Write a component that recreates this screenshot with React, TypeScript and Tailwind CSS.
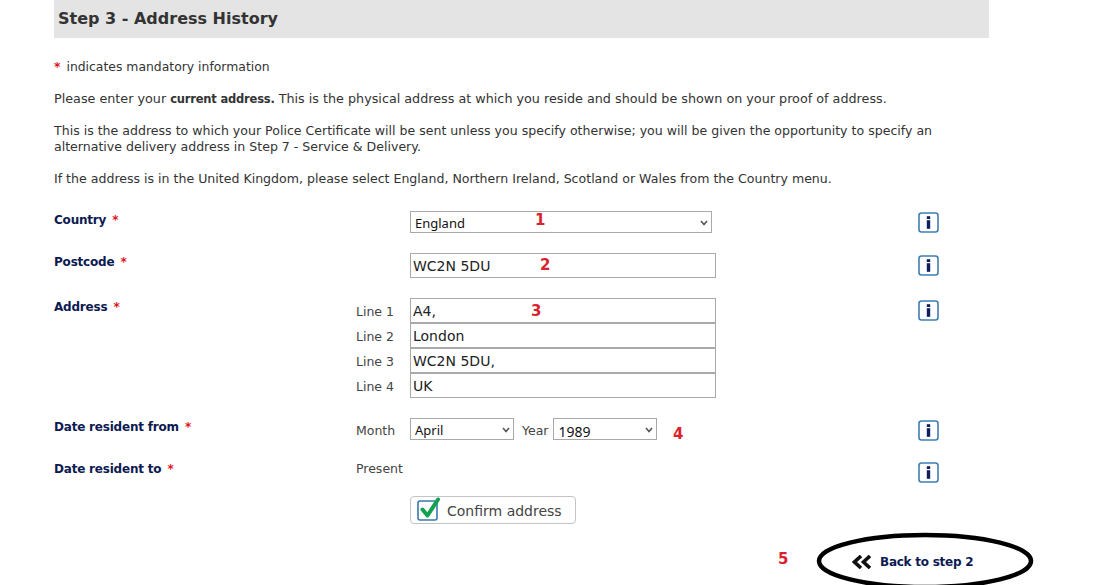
import React from "react";

const verdana = "font-['DejaVu_Sans',sans-serif]";

function Info() {
  return (
    <svg width="21" height="21" viewBox="0 0 21 21" className="block">
      <rect x="1" y="1" width="19" height="19" rx="2.5" fill="#fff" stroke="#3f7fb0" strokeWidth="1.6" />
      <rect x="8.8" y="4.2" width="3.4" height="2.8" fill="#0f1f5c" />
      <rect x="8.8" y="8.2" width="3.4" height="8.6" fill="#0f1f5c" />
    </svg>
  );
}

function Label({ children }: { children: React.ReactNode }) {
  return (
    <span className="block text-[12px] leading-[16px] font-bold tracking-[-0.2px] text-[#0c1a52]">
      {children} <span className="ml-[2px] text-[#e0141c]">*</span>
    </span>
  );
}

function Num({ children, className }: { children: React.ReactNode; className: string }) {
  return (
    <span className={`absolute font-['DejaVu_Sans',sans-serif] font-bold text-[15px] leading-[18px] text-[#d9232e] ${className}`}>
      {children}
    </span>
  );
}

const inputCls =
  "block w-[306px] h-[25px] border border-[#a9a9a9] bg-white pl-[2px] text-[14px] text-[#222] outline-none";

function Select({ value, width, textSize }: { value: string; width: string; textSize: string }) {
  return (
    <div className={`relative ${width}`}>
      <select
        defaultValue={value}
        className={`block h-[22px] w-full appearance-none border border-[#a9a9a9] bg-white pl-[4px] pt-[2px] font-['Noto_Sans',sans-serif] ${textSize} text-[#111] outline-none`}
      >
        <option>{value}</option>
      </select>
      <svg width="8" height="6" viewBox="0 0 8 6" className="pointer-events-none absolute right-[4px] top-[9px]">
        <path d="M1 1 L4 4.5 L7 1" fill="none" stroke="#555" strokeWidth="1.6" />
      </svg>
    </div>
  );
}

function Line({ n, value }: { n: number; value: string }) {
  return (
    <div className="flex items-center h-[25px]">
      <span className="w-[54px] pt-[4px] text-[12.5px] text-[#444]">Line {n}</span>
      <input className={inputCls} readOnly value={value} />
    </div>
  );
}

export default function App() {
  return (
    <div className={`relative h-[585px] w-[1112px] overflow-hidden bg-white pl-[54px] text-[12.57px] text-[#333] ${verdana}`}>
      <h1 className="flex h-[38px] w-[935px] items-center bg-[#e4e4e4] pl-[4px] text-[16px] font-bold text-[#333]">
        Step 3 - Address History
      </h1>

      <div className="w-[900px] pt-[21px] leading-[16px]">
        <p className="text-[12.4px]"><span className="font-bold text-[#e0141c]">*</span> <span className="ml-[2px]">indicates mandatory information</span></p>
        <p className="mt-[16px] text-[12.75px]">
          Please enter your <b className="text-[11.5px] tracking-[-0.2px]">current address.</b> This is the physical address at which you reside and should be shown on your proof of address.
        </p>
        <p className="mt-[16px]">
          This is the address to which your Police Certificate will be sent unless you specify otherwise; you will be given the opportunity to specify an alternative delivery address in Step 7 - Service &amp; Delivery.
        </p>
        <p className="mt-[16px]">
          If the address is in the United Kingdom, please select England, Northern Ireland, Scotland or Wales from the Country menu.
        </p>
      </div>

      <div className="mt-[24px] grid grid-cols-[356px_508px_21px] items-start">
        <div className="pt-[1px]"><Label>Country</Label></div>
        <div>
          <Select value="England" width="w-[302px]" textSize="text-[13px]" />
        </div>
        <div className="pt-[1px]"><Info /></div>

        <div className="mt-[21px]"><Label>Postcode</Label></div>
        <div className="mt-[20px]">
          <input className={inputCls} readOnly value="WC2N 5DU" />
        </div>
        <div className="mt-[22px]"><Info /></div>

        <div className="mt-[21px]"><Label>Address</Label></div>
        <div className="mt-[20px] -ml-[54px]">
          <Line n={1} value="A4," />
          <Line n={2} value="London" />
          <Line n={3} value="WC2N 5DU," />
          <Line n={4} value="UK" />
        </div>
        <div className="mt-[22px]"><Info /></div>

        <div className="mt-[21px]"><Label>Date resident from</Label></div>
        <div className="mt-[20px] -ml-[54px] flex items-center">
          <span className="w-[54px] pt-[4px] text-[12.5px] text-[#444]">Month</span>
          <Select value="April" width="w-[104px]" textSize="text-[13px]" />
          <span className="ml-[8px] mr-[5px] pt-[4px] text-[12.5px] text-[#444]">Year</span>
          <Select value="1989" width="w-[104px]" textSize="text-[14px]" />
        </div>
        <div className="mt-[22px]"><Info /></div>

        <div className="mt-[20px]"><Label>Date resident to</Label></div>
        <div className="mt-[20px] -ml-[54px] text-[12.5px] leading-[16px] text-[#444]">Present</div>
        <div className="mt-[21px]"><Info /></div>

        <div className="mt-[13px]" />
        <div className="mt-[13px]">
          <button className="flex h-[28px] w-[166px] items-center rounded-[4px] border border-[#c4c4c4] bg-white pl-[6px] pt-[2px] text-[14px] text-[#444]">
            <svg width="26" height="26" viewBox="0 0 26 26" className="-mt-[5px] mr-[4px] shrink-0">
              <rect x="1" y="5" width="19" height="19" rx="2" fill="#fff" stroke="#3a78b0" strokeWidth="1.6" />
              <path d="M5.5 13.5 L10.5 19.5 L21 3.5" fill="none" stroke="#12a150" strokeWidth="4" strokeLinecap="round" strokeLinejoin="round" />
            </svg>
            Confirm address
          </button>
        </div>
        <div />
      </div>

      <Num className="left-[535px] top-[211px]">1</Num>
      <Num className="left-[540px] top-[256px]">2</Num>
      <Num className="left-[531px] top-[302px]">3</Num>
      <Num className="left-[673px] top-[425px]">4</Num>
      <Num className="left-[778px] top-[550px]">5</Num>

      <svg width="230" height="62" viewBox="0 0 230 62" className="absolute left-[810px] top-[530px]">
        <ellipse cx="115" cy="31" rx="106" ry="26" fill="#fff" stroke="#000" strokeWidth="4.5" />
      </svg>
      <a className="absolute left-[852px] top-[553px] flex items-center text-[12px] font-bold tracking-[-0.25px] text-[#0c1a52]">
        <svg width="20" height="14" viewBox="0 0 20 14" className="mr-[8px]">
          <path d="M9 1 L2.5 7 L9 13 M18 1 L11.5 7 L18 13" fill="none" stroke="#111" strokeWidth="3.6" />
        </svg>
        Back to step 2
      </a>
    </div>
  );
}
